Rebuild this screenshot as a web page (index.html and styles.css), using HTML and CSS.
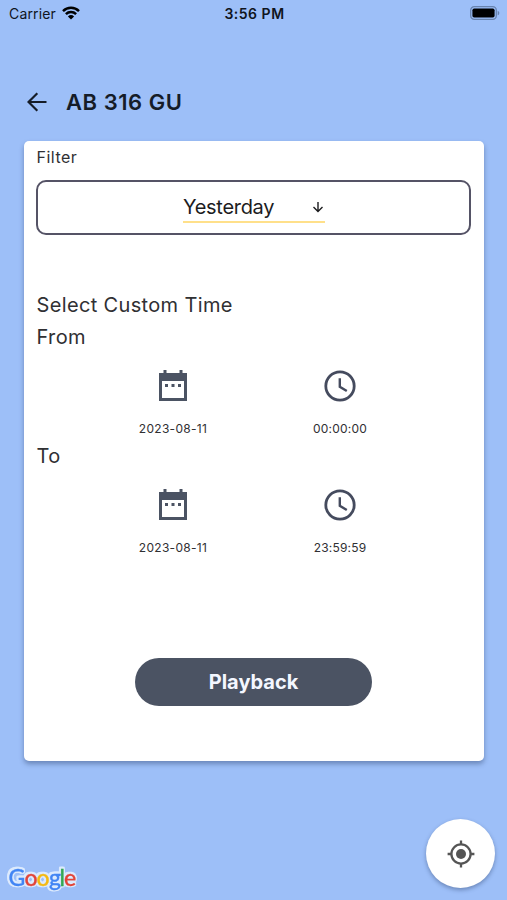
FILE: index.html
```html
<!DOCTYPE html>
<html lang="en">
<head>
<meta charset="utf-8">
<meta name="viewport" content="width=device-width, initial-scale=1">
<title>Playback</title>
<link rel="stylesheet" href="styles.css">
</head>
<body>
<svg class="defs" aria-hidden="true">
  <symbol id="calendar" viewBox="0 0 28 31"><path fill-rule="evenodd" d="M4.500 0h3v3h13V0h3v3H28v28H0V3h4.500zM3 11v17h22V11zM6 14h3v3H6zm6.500 0h3v3h-3zm6.500 0h3v3h-3z"/></symbol>
  <symbol id="clock" viewBox="0 0 32 32"><circle cx="16" cy="16" r="14.200" fill="none" stroke="currentColor" stroke-width="2.800"/><path d="M15.800 8.200v8.600l7 4.200" fill="none" stroke="currentColor" stroke-width="2.400"/></symbol>
</svg>
<div class="app">
  <header class="status">
    <div class="carrier"><span class="carrier-name">Carrier</span>
      <svg class="wifi" viewBox="0 0 18 14"><path d="M1 5.100a11.500 11.500 0 0 1 16 0M3.900 8.100a7.300 7.300 0 0 1 10.200 0" fill="none" stroke="currentColor" stroke-width="2.500"/><path d="M5.900 10.400a4.500 4.500 0 0 1 6.200 0L9 13.500z"/></svg>
    </div>
    <div class="time">3:56 PM</div>
    <svg class="battery" viewBox="0 0 30 14"><rect x=".7" y=".7" width="25.600" height="12.600" rx="3.600" fill="none" stroke="#6883ae" stroke-width="1.300"/><rect x="2.400" y="2.400" width="22.200" height="9.200" rx="1.800"/><path d="M27.700 4.700c2.100.9 2.100 3.700 0 4.600z" fill="#6883ae"/></svg>
  </header>
  <div class="title">
    <svg class="back" viewBox="0 0 20 20"><path d="M19.500 10H1.800M10.300 1.200 1.500 10l8.800 8.800" fill="none" stroke="currentColor" stroke-width="2.200"/></svg>
    <h1>AB 316 GU</h1>
  </div>
  <main class="card">
    <div class="filter-label">Filter</div>
    <div class="select"><div class="select-value"><span>Yesterday</span>
      <svg class="down" viewBox="0 0 12 12"><path d="M6 1v9.300M1.500 6 6 10.500 10.500 6" fill="none" stroke="currentColor" stroke-width="1.400"/></svg></div></div>
    <h2>Select Custom Time</h2>
    <div class="label">From</div>
    <div class="range">
      <div class="pick"><svg class="cal"><use href="#calendar"/></svg><span class="date">2023-08-11</span></div>
      <div class="pick"><svg class="clk"><use href="#clock"/></svg><span class="hour">00:00:00</span></div>
    </div>
    <div class="label to">To</div>
    <div class="range">
      <div class="pick"><svg class="cal"><use href="#calendar"/></svg><span class="date">2023-08-11</span></div>
      <div class="pick"><svg class="clk"><use href="#clock"/></svg><span class="hour">23:59:59</span></div>
    </div>
    <button class="play">Playback</button>
  </main>
  <footer class="bottom">
    <svg class="google" viewBox="0 0 76 32" role="img" aria-label="Google">
      <g class="halo"><text y="20" x="-.5 15.500 27.500 40 50.500 55"><tspan class="b">G</tspan><tspan class="r">o</tspan><tspan class="y">o</tspan><tspan class="b">g</tspan><tspan class="g">l</tspan><tspan class="r">e</tspan></text></g>
    </svg>
    <button class="locate" aria-label="My location"><svg viewBox="0 0 28 28"><circle cx="14" cy="14" r="9.600" fill="none" stroke="currentColor" stroke-width="2.300"/><circle cx="14" cy="14" r="5"/><path d="M14 .6v4M14 23.400v4M.6 14h4M23.400 14h4" stroke="currentColor" stroke-width="2.300"/></svg></button>
  </footer>
</div>
</body>
</html>
```
FILE: styles.css
```css
* { box-sizing: border-box; }
body { margin: 0; font-family: Inter, sans-serif; color: #303033; background: #9dbff8; }
svg { display: block; fill: currentColor; flex: none; }
.defs { position: absolute; width: 0; height: 0; }
.app { width: 507px; height: 900px; display: flex; flex-direction: column; overflow: hidden; }
.status { height: 26px; display: grid; grid-template-columns: 1fr auto 1fr; align-items: center; padding: 0 7px 0 9px; color: #10151d; }
.carrier { display: flex; align-items: center; gap: 6px; }
.carrier-name { font-size: 14px; letter-spacing: .15px; }
.wifi { width: 18px; height: 14px; margin-top: -1px; color: #000; }
.time { font-size: 14px; font-weight: 600; letter-spacing: .5px; }
.battery { width: 30px; height: 14px; justify-self: end; color: #000; }
.title { height: 48px; margin: 52px 0 14.500px; padding-left: 27px; display: flex; align-items: center; gap: 19px; color: #151c28; }
.back { width: 20px; height: 20px; }
h1 { margin: 0; font-size: 22px; line-height: 28px; font-weight: 600; letter-spacing: .55px; }
.card { width: 460px; height: 620px; margin: 0 0 0 24px; padding: 5px 12px 0; background: #fff; border-radius: 5px; box-shadow: 0 3px 5px rgba(30, 50, 90, .4); display: flex; flex-direction: column; }
.filter-label { padding-left: .5px; font-size: 16px; line-height: 22px; letter-spacing: .5px; }
.select { height: 55px; margin-top: 12px; border: 2.500px solid #555366; border-radius: 10px; display: flex; justify-content: center; align-items: center; width: 435px; }
.select-value { display: flex; align-items: center; justify-content: space-between; width: 142px; height: 31px; border-bottom: 2px solid #ffe08a; font-size: 20px; letter-spacing: -.3px; color: #1c1c1e; padding: 1px 1px 0 .5px; }
.down { width: 12px; height: 12px; }
h2 { margin: 56px 0 0; padding-left: .5px; font-size: 20px; line-height: 28px; font-weight: 400; letter-spacing: .35px; }
.label { padding-left: .5px; font-size: 20px; line-height: 28px; margin-top: 4px; letter-spacing: .4px; }
.range { display: grid; grid-template-columns: 167px 167px; justify-content: center; padding-top: 19px; height: 87px; margin-right: -5px; }
.pick { display: flex; flex-direction: column; align-items: center; }
.cal { width: 28px; height: 31px; color: #4b5363; }
.clk { width: 32px; height: 32px; color: #454b5e; }
.date, .hour { font-size: 12px; line-height: 16px; margin-top: 20px; letter-spacing: .3px; }
.hour { margin-top: 19px; letter-spacing: .2px; }
.to { margin-top: 4px; }
.play { width: 237px; height: 48px; margin: 101px auto 0 99px; border: 0; border-radius: 24px; background: #4b5363; color: #f4f7ff; font: 700 20px Inter, sans-serif; flex: none; }
.bottom { flex: 1; display: flex; justify-content: space-between; align-items: flex-end; padding: 0 12px 12px 9px; }
.google { width: 76px; height: 32px; overflow: visible; margin-bottom: -10px; font: 500 23px Lato, sans-serif; }
.google text { stroke-width: .3px; }
.halo { filter: drop-shadow(1.200px 0 0 #dceafd) drop-shadow(-1.200px 0 0 #dceafd) drop-shadow(0 1.200px 0 #dceafd) drop-shadow(0 -1.200px 0 #dceafd); }
.b { fill: #4285f4; stroke: #4285f4; }
.r { fill: #e24439; stroke: #e24439; }
.y { fill: #f4b911; stroke: #f4b911; }
.g { fill: #34a853; stroke: #34a853; }
.locate { width: 69px; height: 69px; padding: 0; border: 0; border-radius: 50%; background: #fff; color: #555; display: grid; place-items: center; box-shadow: 0 2px 4px rgba(30, 50, 90, .4); }
.locate svg { width: 28px; height: 28px; }
```
